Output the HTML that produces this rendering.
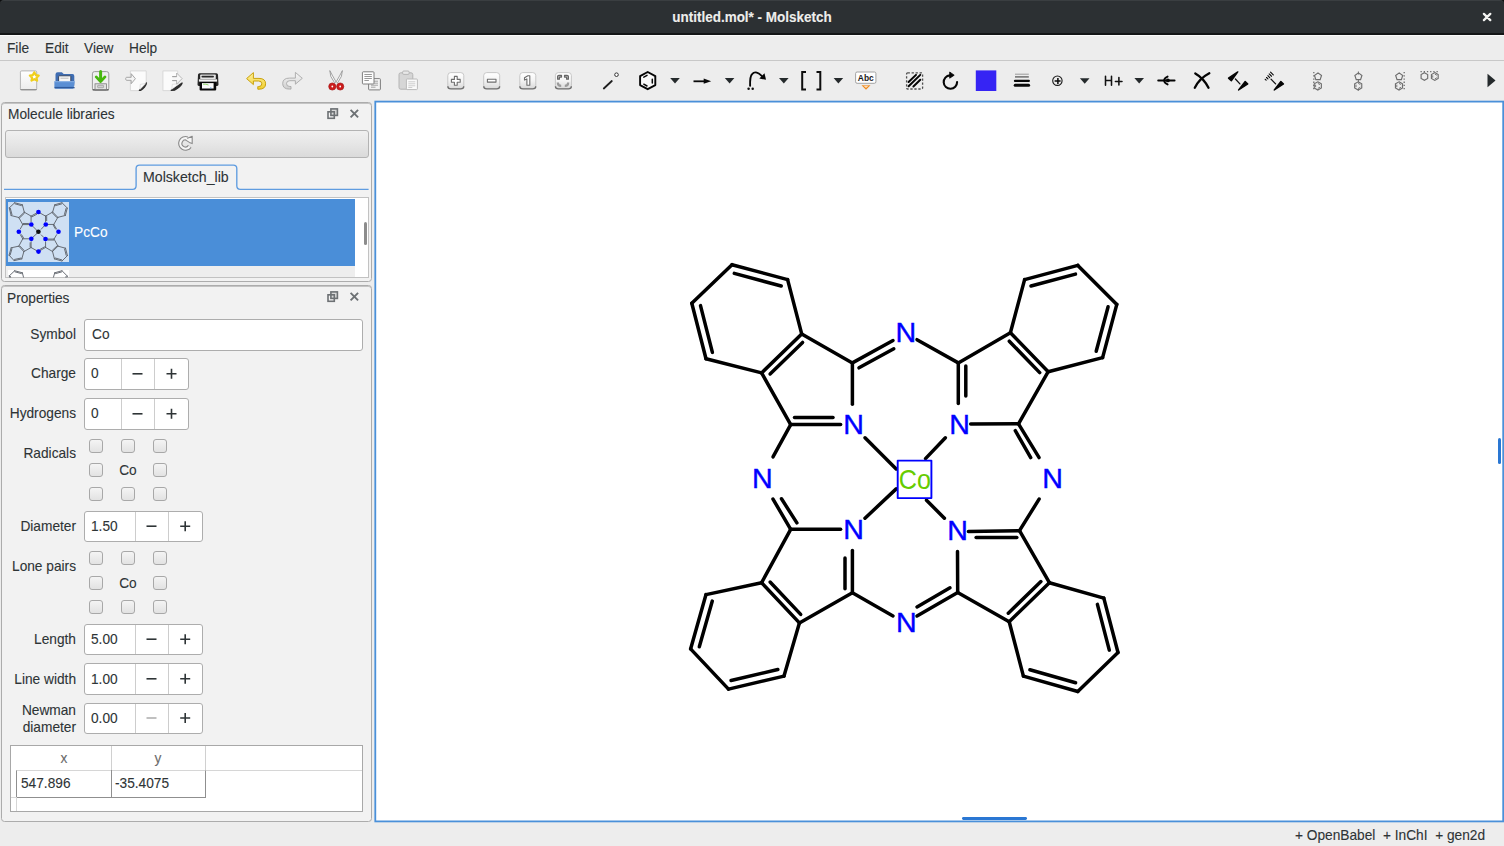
<!DOCTYPE html>
<html><head><meta charset="utf-8">
<style>
*{box-sizing:border-box;margin:0;padding:0}
html,body{width:1504px;height:846px;overflow:hidden}
body{position:relative;background:#ededed;font-family:"Liberation Sans",sans-serif;color:#2e3436}
.a{position:absolute}
.tx{line-height:16px;white-space:nowrap;z-index:4;-webkit-text-stroke:0.1px currentColor}
.dock{background:#f2f2f2;border:1px solid #acacac;border-radius:3.5px;box-shadow:inset 0 1px 0 #c4c4c4}
.inp{background:#fff;border:1px solid #adadad;border-radius:3px}
.spin{background:#fff;border:1px solid #adadad;border-radius:3px}
.spin .d{position:absolute;top:0;bottom:0;width:1px;background:#cdcdcd}
.cb{width:14px;height:14px;border:1px solid #a8a8a8;border-radius:3px;background:linear-gradient(#f4f4f4,#e2e2e2)}
</style></head><body>

<div class="a" style="left:0;top:0;width:1504px;height:12px;background:#0c0d0e"></div><div class="a" style="left:0;top:0;width:1504px;height:35px;background:#2c3033;border-radius:4px 4px 0 0;border-top:1px solid #3a3e41;border-bottom:2px solid #141617"></div><div class="a" style="left:0;top:35px;width:1504px;height:1px;background:#fbfbfb"></div>
<div class="a tx" style="left:602.00px;width:300px;text-align:center;top:8.78px;transform-origin:50% 0;font-size:14.50px;transform:scaleX(0.930);color:#eeeeec;font-weight:bold">untitled.mol* - Molsketch</div>
<svg class="a" style="left:1481px;top:11px" width="12" height="12" viewBox="0 0 12 12"><path d="M2.9 2.9L9.3 9.1M9.3 2.9L2.9 9.1" stroke="#f4f4f2" stroke-width="2.3" stroke-linecap="round"/></svg>
<div class="a" style="left:0;top:36px;width:1504px;height:25px;background:#ededed;border-bottom:1px solid #c8c8c8"></div>
<div class="a tx" style="left:7.00px;top:39.98px;transform-origin:0 0;font-size:14.50px;transform:scaleX(0.945)">File</div>
<div class="a tx" style="left:45.00px;top:39.98px;transform-origin:0 0;font-size:14.50px;transform:scaleX(0.945)">Edit</div>
<div class="a tx" style="left:84.30px;top:39.98px;transform-origin:0 0;font-size:14.50px;transform:scaleX(0.945)">View</div>
<div class="a tx" style="left:129.30px;top:39.98px;transform-origin:0 0;font-size:14.50px;transform:scaleX(0.945)">Help</div>
<svg class="a" style="left:0;top:0;z-index:2" width="1504" height="101" viewBox="0 0 1504 101">
<defs>
<linearGradient id="gpage" x1="0" y1="0" x2="0" y2="1"><stop offset="0" stop-color="#ffffff"/><stop offset="1" stop-color="#ececec"/></linearGradient>
<linearGradient id="gzoom" x1="0" y1="0" x2="0" y2="1"><stop offset="0" stop-color="#ffffff"/><stop offset="0.5" stop-color="#f4f4f4"/><stop offset="1" stop-color="#d9d9d9"/></linearGradient>
<linearGradient id="gfold" x1="0" y1="0" x2="1" y2="1"><stop offset="0" stop-color="#ffffff"/><stop offset="1" stop-color="#333"/></linearGradient>
</defs>
<!-- new -->
<rect x="20.4" y="70.9" width="16.3" height="19.2" rx="1.3" fill="url(#gpage)" stroke="#b4b4b4" stroke-width="1"/>
<path d="M20.4 89.6h16.3" stroke="#8a8a8a" stroke-width="1"/>
<path d="M34.3 72.3l1.45 2.75 3 .45-2.2 2.1.55 3-2.8-1.45-2.8 1.45.55-3-2.2-2.1 3-.45z" fill="#fff" stroke="#f0cf1c" stroke-width="2.2" stroke-linejoin="round"/>
<!-- open -->
<path d="M55.5 74.4q0-2.2 2.2-2.2h4.2l1.8 1.9h8.8q1.8 0 1.8 1.8v9.8h-18.8z" fill="#3f6db2"/>
<rect x="58.6" y="75.8" width="12.2" height="7.8" rx="0.8" fill="#f6f6f6" stroke="#2f3c55" stroke-width="0.9"/>
<path d="M60.5 78.2h8" stroke="#bdbdbd" stroke-width="1"/>
<path d="M54.4 81.2h20.3l-1 6.6q-.2 1-1.2 1h-16.9q-1 0-1.2-1z" fill="#5b8fd4"/>
<path d="M54.6 87.6h20" stroke="#2f5a9c" stroke-width="1.4"/>
<path d="M54.6 81.7h20" stroke="#8fb5e6" stroke-width="0.9"/>
<!-- save -->
<rect x="92.4" y="71.6" width="16.4" height="18.8" rx="2.2" fill="#efefef" stroke="#9b9b9b" stroke-width="1"/>
<path d="M92.6 89.8h16" stroke="#555" stroke-width="1.2"/>
<rect x="95" y="83.8" width="11.4" height="5.6" fill="#e2e2e2" stroke="#7c7c7c" stroke-width="0.8"/>
<rect x="97.6" y="85.3" width="6" height="2.4" rx="0.6" fill="#cfcfcf" stroke="#8c8c8c" stroke-width="0.6"/>
<path d="M100.6 71.4v8.3" stroke="#47b80f" stroke-width="3" stroke-linecap="round"/>
<path d="M96.2 76.9l4.4 4.6 4.4-4.6" fill="none" stroke="#47b80f" stroke-width="2.8" stroke-linecap="round" stroke-linejoin="round"/>
<!-- import -->
<path d="M130.4 70.9h15.8v12.2l-7.3 7.5h-8.5z" fill="#fbfbfb" stroke="#d6d6d6" stroke-width="0.9"/>
<path d="M139.3 90.4l7.2-7.4q-.2 2.2-2 4.2t-4 3.3z" fill="#2e2e2e" stroke="#2e2e2e" stroke-width="1.2" stroke-linejoin="round"/>
<path d="M140.2 84.4l5.6-.9-5.8 5.9z" fill="#fdfdfd" stroke="#c8c8c8" stroke-width="0.5"/>
<path d="M126.6 77.3h4.6v-3.6l4.2 5-4.2 5v-3.4h-4.6q-.9 0-.9-1.5t.9-1.5z" fill="#f4f4f4" stroke="#9d9d9d" stroke-width="0.9" stroke-linejoin="round"/>
<!-- export -->
<path d="M162.9 70.9h14.8v12l-6.3 7.7h-8.5z" fill="#fbfbfb" stroke="#d6d6d6" stroke-width="0.9"/>
<path d="M171.3 90.4l10.8-7.4q-.5 2-2.6 3.8t-5 3.4z" fill="#2e2e2e" stroke="#2e2e2e" stroke-width="1.3" stroke-linejoin="round"/>
<path d="M172.3 84.3l6.8-.6-7.3 5.6z" fill="#fdfdfd" stroke="#c8c8c8" stroke-width="0.5"/>
<path d="M172.4 76.6h4.2v-3.6l5.5 5.6-5.5 5.6v-3.6h-4.2" fill="#f7f7f7" stroke="#b0b0b0" stroke-width="0.9" stroke-linejoin="round"/>
<path d="M172.2 76.6h4.6M172.2 80.6h4.6" stroke="#9c9c9c" stroke-width="0.9"/>
<!-- print -->
<path d="M199.6 73.3h16.8q1.5 0 1.6 1.5l.5 9.8q0 1.3-1.3 1.3h-18.4q-1.3 0-1.3-1.3l.5-9.8q.1-1.5 1.6-1.5z" fill="#262626"/>
<rect x="200.2" y="74.6" width="15.6" height="4.4" rx="0.6" fill="#e4e4e4"/>
<path d="M202.3 76.6h10.8" stroke="#2a2a2a" stroke-width="1.7" stroke-linecap="round"/>
<rect x="198.9" y="79.3" width="18.2" height="2.3" fill="#f2f2f2"/>
<rect x="199.6" y="82" width="16.6" height="8.6" rx="1.1" fill="#080808"/>
<rect x="202" y="83.1" width="11.6" height="5.4" fill="#fbfbfb"/>
<path d="M203 84.2q3-.4 5.5.8" stroke="#8fd66a" stroke-width="1" fill="none"/>
<circle cx="210.8" cy="87.9" r="0.7" fill="#5aa0e6"/>
<!-- undo -->
<defs><linearGradient id="gund" x1="0" y1="0" x2="0" y2="1"><stop offset="0" stop-color="#fdf0a0"/><stop offset="1" stop-color="#f2cf2a"/></linearGradient>
<linearGradient id="gred" x1="0" y1="0" x2="0" y2="1"><stop offset="0" stop-color="#f8f8f8"/><stop offset="1" stop-color="#cfcfcf"/></linearGradient></defs>
<path d="M253.4 72.6l-6.8 6 6.8 6v-3.6h5.2q3.2 0 3.2 2.8t-3.2 2.8h-.8v2.6h1.2q6.6 0 6.6-5.4t-6.6-5.4h-5.6z" fill="url(#gund)" stroke="#c9a10c" stroke-width="1" stroke-linejoin="round"/>
<!-- redo -->
<path d="M295.4 72.4l6.9 5.9-6.9 5.9v-3.5h-5.6q-3.3 0-3.3 2.9t3.3 2.9h1.2v2.6h-1.5q-6.8 0-6.8-5.5t6.8-5.5h5.9z" fill="url(#gred)" stroke="#a8a8a8" stroke-width="0.9" stroke-linejoin="round"/>
<!-- cut -->
<path d="M329.8 70.6q-.4 5.5 4.8 12.2l1.4-1q-3.6-6.2-6.2-11.2z" fill="#fafafa" stroke="#8d8d8d" stroke-width="0.8" stroke-linejoin="round"/>
<path d="M342.4 70.6q.4 5.5-4.8 12.2l-1.4-1q3.6-6.2 6.2-11.2z" fill="#fafafa" stroke="#8d8d8d" stroke-width="0.8" stroke-linejoin="round"/>
<circle cx="332.3" cy="86.5" r="3.6" fill="#cc1c1c" stroke="#a01010" stroke-width="0.6"/>
<circle cx="340.2" cy="86.5" r="3.6" fill="#cc1c1c" stroke="#a01010" stroke-width="0.6"/>
<circle cx="332.3" cy="86.5" r="0.9" fill="#fff"/><circle cx="340.2" cy="86.5" r="0.9" fill="#fff"/>
<!-- copy -->
<rect x="368.6" y="78.6" width="11.8" height="11.3" rx="0.8" fill="#f3f3f3" stroke="#7e7e7e" stroke-width="1"/>
<path d="M371 81.2h7M371 83.2h7M371 85.2h7M371 87.2h4.5" stroke="#9a9a9a" stroke-width="0.9"/>
<rect x="362.4" y="71.8" width="11.6" height="12.2" rx="0.8" fill="#fdfdfd" stroke="#7e7e7e" stroke-width="1"/>
<path d="M364.4 74.5h7.5M364.4 76.5h7.5M364.4 78.5h7.5M364.4 80.5h4.5" stroke="#8c8c8c" stroke-width="0.9"/>
<!-- paste -->
<rect x="399" y="72.8" width="13.8" height="16.4" rx="1.8" fill="#d6d6d6" stroke="#b4b4b4" stroke-width="1"/>
<rect x="402.6" y="71" width="6.6" height="3.4" rx="1.2" fill="#e8e8e8" stroke="#b0b0b0" stroke-width="0.9"/>
<rect x="406.4" y="79" width="11" height="10.6" rx="0.8" fill="#fafafa" stroke="#bababa" stroke-width="1"/>
<path d="M408.3 81.8h7M408.3 83.8h7M408.3 85.8h7M408.3 87.5h4" stroke="#c8c8c8" stroke-width="0.9"/>
<!-- zoom buttons -->
<rect x="447.8" y="72.6" width="16" height="16" rx="3" fill="url(#gzoom)" stroke="#c2c2c2" stroke-width="0.9"/><path d="M447.8 86.2q0 2.6 3 2.6h10q3 0 3-2.6" fill="none" stroke="#707070" stroke-width="1.3"/><rect x="483.7" y="72.6" width="16" height="16" rx="3" fill="url(#gzoom)" stroke="#c2c2c2" stroke-width="0.9"/><path d="M483.7 86.2q0 2.6 3 2.6h10q3 0 3-2.6" fill="none" stroke="#707070" stroke-width="1.3"/><rect x="519.8" y="72.6" width="16" height="16" rx="3" fill="url(#gzoom)" stroke="#c2c2c2" stroke-width="0.9"/><path d="M519.8 86.2q0 2.6 3 2.6h10q3 0 3-2.6" fill="none" stroke="#707070" stroke-width="1.3"/><rect x="555.4" y="72.6" width="16" height="16" rx="3" fill="url(#gzoom)" stroke="#c2c2c2" stroke-width="0.9"/><path d="M555.4 86.2q0 2.6 3 2.6h10q3 0 3-2.6" fill="none" stroke="#707070" stroke-width="1.3"/>
<g fill="#fff" stroke="#6d6d6d" stroke-width="1.1" stroke-linejoin="round">
<path d="M454.4 76.4h2.8v3h3v2.8h-3v3h-2.8v-3h-3v-2.8h3z"/>
<path d="M487.4 79.2h8.6v2.9h-8.6z"/>
<path d="M524.5 77.8l3.4-2.1h1.9v9.6h-2.9v-6.4l-2.4 1.2z"/>
</g>
<g stroke-width="1.2" stroke-linejoin="round">
<path d="M557.6 79.2v-2.6q0-1.3 1.3-1.3h2.6v1.8h-1.5q-.6 0-.6.6v1.5z" fill="#bbb" stroke="#666"/>
<path d="M568.4 79.2v-2.6q0-1.3-1.3-1.3h-2.6v1.8h1.5q.6 0 .6.6v1.5z" fill="#bbb" stroke="#666"/>
<path d="M557.8 82.4q0 3.4 3.4 3.4" fill="none" stroke="#9a9a9a" stroke-width="2.2"/>
<path d="M568.2 82.4q0 3.4-3.4 3.4" fill="none" stroke="#9a9a9a" stroke-width="2.2"/>
</g>
<!-- line tool -->
<path d="M603.8 88.5l8-7.5" stroke="#1e1e1e" stroke-width="1.8" stroke-linecap="round"/>
<circle cx="616.5" cy="74.7" r="1.8" fill="#fff" stroke="#333" stroke-width="1"/>
<!-- hexagon -->
<path d="M647.7 72l7.6 4.1v9l-7.6 4.1-7.6-4.1v-9z" fill="#fafafa" stroke="#050505" stroke-width="1.9" stroke-linejoin="round"/>
<path d="M643.8 77.2l3.2-1.8M652.3 79.2v3.9M643.8 84.2l3.2 1.8" stroke="#0a0a0a" stroke-width="1.5" stroke-linecap="round" fill="none"/>
<!-- dropdowns -->
<g fill="#252a2c">
<path d="M670.2 77.9h9.6l-4.8 5.6z"/>
<path d="M724.8 77.9h9.6l-4.8 5.6z"/>
<path d="M779 77.9h9.6l-4.8 5.6z"/>
<path d="M833.6 77.9h9.6l-4.8 5.6z"/>
<path d="M1079.9 78.2h9.6l-4.8 5.6z"/>
<path d="M1134.4 77.9h9.6l-4.8 5.6z"/>
<path d="M1487.5 73.8l8 6.7-8 6.7z"/>
</g>
<!-- arrow -->
<path d="M693.5 81.3h11" stroke="#0a0a0a" stroke-width="1.8"/>
<path d="M711.2 81.2l-7.5-2.6v5.2z" fill="#0a0a0a"/>
<!-- curved arrow -->
<path d="M750.1 85.8q-.3-10 2.2-11.9q2-2.2 4.6-1.2q2.2.7 4.8 3.2" fill="none" stroke="#050505" stroke-width="1.9" stroke-linecap="round"/>
<path d="M766 79.8l-1.5-6.5-5.2 5.2z" fill="#050505"/>
<circle cx="748.6" cy="88.8" r="1.25" fill="#111"/><circle cx="752.7" cy="88.7" r="1.25" fill="#111"/>
<!-- brackets -->
<path d="M806 71.9h-3.8v17.6h3.8M816.5 71.9h3.8v17.6h-3.8" fill="none" stroke="#0e0e0e" stroke-width="2"/>
<!-- Abc -->
<rect x="855.6" y="72" width="20.3" height="11.3" rx="1.5" fill="#fff" stroke="#9a9a9a" stroke-width="0.9"/>
<text x="865.8" y="80.9" text-anchor="middle" font-family="Liberation Sans" font-weight="bold" font-size="9.2" fill="#1a1a1a" transform="translate(865.8 0) scale(0.92 1) translate(-865.8 0)">Abc</text>
<path d="M861.5 85.3h9l-4.5 4.4z" fill="#f08a1c"/>
<path d="M863.5 85.7h5l-2.5 2.3z" fill="#fff" opacity="0.7"/>
<!-- hatched -->
<rect x="906.6" y="72.8" width="16" height="16.2" rx="1" fill="none" stroke="#505050" stroke-width="1.3" stroke-dasharray="2.3 1.7"/>
<path d="M908.6 82l7.4-7.1M908.6 86.3l11.7-11.4M913.4 86.5l6.9-6.7" stroke="#050505" stroke-width="2" stroke-linecap="round"/>
<!-- rotate -->
<path d="M957.1 82a6.7 6.7 0 1 1-7.2-6.6" fill="none" stroke="#050505" stroke-width="2.1" stroke-linecap="round"/>
<path d="M954.2 75.2l-4.5-3.2v6.2z" fill="#050505" stroke="#050505" stroke-width="0.8" stroke-linejoin="round"/>
<!-- color -->
<rect x="975.8" y="70.4" width="20.5" height="20.6" fill="#3624f4"/>
<!-- line widths -->
<path d="M1015 74.2h13.8" stroke="#9a9a9a" stroke-width="1"/>
<path d="M1015 76.9h13.8" stroke="#5a5a5a" stroke-width="1.3"/>
<path d="M1015 80.9h13.8" stroke="#0a0a0a" stroke-width="2.3" stroke-linecap="round"/>
<path d="M1015.2 85.2h13.4" stroke="#0a0a0a" stroke-width="3" stroke-linecap="round"/>
<!-- charge -->
<circle cx="1057.4" cy="80.7" r="4.7" fill="none" stroke="#1a1a1a" stroke-width="1.1"/>
<path d="M1054.6 80.9h6M1057.9 77.9v6" stroke="#0a0a0a" stroke-width="1.5"/>
<!-- H+ -->
<path d="M1105.5 76.2v9M1111.5 76.2v9M1105.5 80.4h6M1115.4 81.4h6.6M1118.9 77.5v7.5" stroke="#111" stroke-width="1.55" stroke-linecap="round" fill="none"/>
<!-- bond pi -->
<path d="M1158.2 80.5h16.4" stroke="#050505" stroke-width="1.9" stroke-linecap="round"/>
<path d="M1167.6 76.6q-3.4 1.4-3.4 3.9t3.4 3.9" fill="none" stroke="#050505" stroke-width="1.9" stroke-linecap="round"/>
<circle cx="1167.9" cy="80.4" r="1.9" fill="#050505"/>
<!-- X -->
<path d="M1195.3 73.4Q1204 78.4 1208.5 87.8M1209.3 73.3Q1199.5 78.4 1194.8 87.7" fill="none" stroke="#050505" stroke-width="2.3" stroke-linecap="round"/>
<!-- wedge -->
<path d="M1237.8 71.9l-9.3 6.3 2.8 2.6z" fill="#050505" stroke="#050505" stroke-width="1.4" stroke-linejoin="round"/>
<path d="M1235.4 79l4.5 4.9" stroke="#111" stroke-width="1.3" stroke-linecap="round"/>
<path d="M1238.6 90l6.6-8.5 2.6 2.4z" fill="#050505" stroke="#050505" stroke-width="1.4" stroke-linejoin="round"/>
<!-- hashed wedge -->
<path d="M1265.22 79.26L1266.14 80.20M1266.55 77.49L1267.93 78.89M1267.89 75.72L1269.71 77.58M1269.22 73.96L1271.50 76.26M1270.56 72.19L1273.28 74.95" stroke="#050505" stroke-width="1.1" stroke-linecap="round"/>
<path d="M1271 79.1l4.6 4.8" stroke="#111" stroke-width="1.3" stroke-linecap="round"/>
<path d="M1274.3 90l6.6-8.5 2.6 2.4z" fill="#050505" stroke="#050505" stroke-width="1.4" stroke-linejoin="round"/>
<!-- align icons -->
<g fill="none" stroke="#6e6e6e" stroke-width="1.15">
<path d="M1318.00 72.90L1321.52 75.46L1320.17 79.59L1315.83 79.59L1314.48 75.46Z"/><path d="M1317.80 81.80L1321.35 83.85L1321.35 87.95L1317.80 90.00L1314.25 87.95L1314.25 83.85Z"/><path d="M1317.80 83.36L1320.00 84.63M1320.00 87.17L1317.80 88.44M1315.60 87.17L1315.60 84.63" stroke-width="0.9"/><path d="M1313.8 72v18" stroke-dasharray="1.3 1.9" stroke-width="1.3"/><path d="M1358.40 72.90L1361.92 75.46L1360.57 79.59L1356.23 79.59L1354.88 75.46Z"/><path d="M1358.20 81.80L1361.75 83.85L1361.75 87.95L1358.20 90.00L1354.65 87.95L1354.65 83.85Z"/><path d="M1358.20 83.36L1360.40 84.63M1360.40 87.17L1358.20 88.44M1356.00 87.17L1356.00 84.63" stroke-width="0.9"/><path d="M1358.4 71.5v3M1358.4 79.5v3M1358.4 88.5v2" stroke-width="1"/><path d="M1399.20 72.90L1402.72 75.46L1401.37 79.59L1397.03 79.59L1395.68 75.46Z"/><path d="M1399.00 81.80L1402.55 83.85L1402.55 87.95L1399.00 90.00L1395.45 87.95L1395.45 83.85Z"/><path d="M1399.00 83.36L1401.20 84.63M1401.20 87.17L1399.00 88.44M1396.80 87.17L1396.80 84.63" stroke-width="0.9"/><path d="M1404.2 72v18" stroke-dasharray="1.3 1.9" stroke-width="1.3"/><path d="M1424.40 72.70L1427.69 74.60L1427.69 78.40L1424.40 80.30L1421.11 78.40L1421.11 74.60Z"/><path d="M1434.80 72.60L1438.18 74.55L1438.18 78.45L1434.80 80.40L1431.42 78.45L1431.42 74.55Z"/><path d="M1434.80 74.08L1436.89 75.29M1436.89 77.71L1434.80 78.92M1432.71 77.71L1432.71 75.29" stroke-width="0.9"/><path d="M1420.5 71.6h19" stroke-dasharray="1.3 1.9" stroke-width="1.2"/>
</g>
</svg>

<div class="a dock" style="left:1px;top:102px;width:371px;height:180px"></div>
<div class="a tx" style="left:7.50px;top:106.38px;transform-origin:0 0;font-size:14.50px;transform:scaleX(0.945)">Molecule libraries</div>
<svg class="a" style="left:0;top:0;z-index:3" width="372" height="310" viewBox="0 0 372 310">
<g fill="none" stroke="#6d7174" stroke-width="1.6">
<rect x="330.9" y="108.9" width="6.5" height="6.5" fill="#d9d9d9"/><rect x="328" y="111.8" width="6.3" height="6.5"/>
<path d="M350.6 109.8l7.5 7.6M358.1 109.8l-7.5 7.6" stroke-width="1.9"/>
<rect x="330.9" y="291.9" width="6.5" height="6.5" fill="#d9d9d9"/><rect x="328" y="294.8" width="6.3" height="6.5"/>
<path d="M350.6 292.8l7.5 7.6M358.1 292.8l-7.5 7.6" stroke-width="1.9"/>
</g>
</svg>
<div class="a" style="left:5px;top:130px;width:363.5px;height:27.5px;border:1px solid #b3b3b3;border-radius:3px;background:linear-gradient(#f0f0f0,#e6e6e6 50%,#dadada)"></div>
<svg class="a" style="left:0;top:0;z-index:3" width="372" height="160" viewBox="0 0 372 160">
<path d="M187.28 138.51A5.20 5.20 0 1 0 189.76 146.38" fill="none" stroke="#8a8a8a" stroke-width="4.4"/>
<path d="M184.6 139.4l7.6-3.1v7.3l-2.8-1.2z" fill="#f6f6f6" stroke="#8a8a8a" stroke-width="1.1" stroke-linejoin="round"/>
<path d="M187.28 138.51A5.20 5.20 0 1 0 189.76 146.38" fill="none" stroke="#f6f6f6" stroke-width="2.2"/>
</svg>
<svg class="a" style="left:0;top:0;z-index:3" width="372" height="195"><path d="M4 189.3H132.6Q136.1 189.3 136.1 185.8V168.6Q136.1 165.1 139.6 165.1H233.3Q236.8 165.1 236.8 168.6V185.8Q236.8 189.3 240.3 189.3H368.6" fill="none" stroke="#5f9ce0" stroke-width="1.35"/></svg>
<div class="a tx" style="left:143.00px;top:169.18px;transform-origin:0 0;font-size:14.50px;transform:scaleX(0.975)">Molsketch_lib</div>
<div class="a" style="left:5px;top:196.5px;width:363.5px;height:81px;border:1px solid #c2c2c2;background:#fff;overflow:hidden">
 <div class="a" style="left:0;top:1px;width:349px;height:67px;background:#4a8ed8"></div>
 <div class="a" style="left:0;top:68px;width:349px;height:12px;background:#eeeeee"></div>
 <div class="a" style="left:2px;top:4.3px;width:60.6px;height:60px;background:#cfe0f3"></div>
 <div class="a" style="left:2px;top:72.5px;width:60.6px;height:10px;background:#fff"></div>
 <div class="a" style="left:358px;top:24px;width:3px;height:23px;background:#8c8c8c;border-radius:1.5px"></div>
</div>
<div class="a tx" style="left:74.20px;top:224.18px;transform-origin:0 0;font-size:14.50px;transform:scaleX(0.945);color:#ffffff">PcCo</div>
<svg class="a" style="left:0;top:0;z-index:3" width="372" height="290" viewBox="0 0 372 290">
<defs><clipPath id="thc"><rect x="8" y="201.8" width="60.6" height="60"/></clipPath><clipPath id="thc2"><rect x="8" y="270" width="60.6" height="7.5"/></clipPath></defs>
<g clip-path="url(#thc)"><g transform="translate(38.40 231.80) scale(0.1366) translate(-905.5 -477.8)">
<g stroke="#585d64" stroke-width="6.5" stroke-linecap="round" fill="none">
<line x1="732" y1="265" x2="788" y2="280"/>
<line x1="734" y1="273" x2="781" y2="286"/>
<line x1="788" y1="280" x2="802" y2="334"/>
<line x1="802" y1="334" x2="762" y2="373"/>
<line x1="762" y1="373" x2="706" y2="359"/>
<line x1="706" y1="359" x2="692" y2="303"/>
<line x1="712" y1="352" x2="700" y2="306"/>
<line x1="692" y1="303" x2="732" y2="265"/>
<line x1="1078" y1="265" x2="1025" y2="280"/>
<line x1="1075" y1="274" x2="1031" y2="286"/>
<line x1="1025" y1="280" x2="1010" y2="333"/>
<line x1="1010" y1="333" x2="1048" y2="372"/>
<line x1="1048" y1="372" x2="1103" y2="358"/>
<line x1="1103" y1="358" x2="1117" y2="304"/>
<line x1="1096" y1="351" x2="1108" y2="307"/>
<line x1="1117" y1="304" x2="1078" y2="265"/>
<line x1="728" y1="689" x2="784" y2="676"/>
<line x1="731" y1="680" x2="778" y2="670"/>
<line x1="784" y1="676" x2="799" y2="623"/>
<line x1="799" y1="623" x2="762" y2="583"/>
<line x1="762" y1="583" x2="706" y2="595"/>
<line x1="706" y1="595" x2="691" y2="649"/>
<line x1="712" y1="601" x2="699" y2="647"/>
<line x1="691" y1="649" x2="728" y2="689"/>
<line x1="1078" y1="692" x2="1023" y2="676"/>
<line x1="1076" y1="683" x2="1030" y2="670"/>
<line x1="1023" y1="676" x2="1009" y2="622"/>
<line x1="1009" y1="622" x2="1049" y2="583"/>
<line x1="1049" y1="583" x2="1104" y2="598"/>
<line x1="1104" y1="598" x2="1118" y2="652"/>
<line x1="1097" y1="604" x2="1109" y2="650"/>
<line x1="1118" y1="652" x2="1078" y2="692"/>
<line x1="803" y1="342" x2="770" y2="374"/>
<line x1="1009" y1="341" x2="1040" y2="373"/>
<line x1="801" y1="614" x2="770" y2="582"/>
<line x1="1008" y1="613" x2="1041" y2="582"/>
<line x1="802" y1="334" x2="852" y2="363"/>
<line x1="762" y1="373" x2="791" y2="425"/>
<line x1="852" y1="363" x2="893" y2="340"/>
<line x1="859" y1="368" x2="894" y2="349"/>
<line x1="852" y1="363" x2="852" y2="404"/>
<line x1="791" y1="425" x2="841" y2="425"/>
<line x1="794" y1="417" x2="833" y2="417"/>
<line x1="791" y1="425" x2="773" y2="457"/>
<line x1="1010" y1="333" x2="958" y2="363"/>
<line x1="1048" y1="372" x2="1018" y2="424"/>
<line x1="917" y1="340" x2="958" y2="363"/>
<line x1="958" y1="363" x2="958" y2="403"/>
<line x1="966" y1="366" x2="966" y2="396"/>
<line x1="971" y1="424" x2="1018" y2="424"/>
<line x1="1018" y1="424" x2="1039" y2="458"/>
<line x1="1015" y1="431" x2="1031" y2="458"/>
<line x1="799" y1="623" x2="852" y2="593"/>
<line x1="762" y1="583" x2="791" y2="529"/>
<line x1="791" y1="529" x2="773" y2="499"/>
<line x1="782" y1="499" x2="797" y2="523"/>
<line x1="791" y1="529" x2="841" y2="529"/>
<line x1="852" y1="593" x2="852" y2="551"/>
<line x1="845" y1="558" x2="845" y2="589"/>
<line x1="852" y1="593" x2="893" y2="616"/>
<line x1="1009" y1="622" x2="958" y2="592"/>
<line x1="1049" y1="583" x2="1020" y2="531"/>
<line x1="1020" y1="531" x2="1039" y2="499"/>
<line x1="968" y1="531" x2="1020" y2="531"/>
<line x1="976" y1="538" x2="1017" y2="538"/>
<line x1="958" y1="592" x2="958" y2="551"/>
<line x1="958" y1="592" x2="917" y2="616"/>
<line x1="950" y1="588" x2="917" y2="607"/>
<line x1="865" y1="438" x2="896" y2="469"/>
<line x1="945" y1="438" x2="926" y2="459"/>
<line x1="865" y1="518" x2="896" y2="489"/>
<line x1="944" y1="518" x2="926" y2="500"/>
</g>
<g fill="#0000ff">
<circle cx="905.9" cy="332.5" r="17"/>
<circle cx="762.2" cy="477.6" r="17"/>
<circle cx="1052.6" cy="477.6" r="17"/>
<circle cx="906.2" cy="622.5" r="17"/>
<circle cx="853.6" cy="424.4" r="17"/>
<circle cx="959.5" cy="424.3" r="17"/>
<circle cx="853.6" cy="529.4" r="17"/>
<circle cx="957.6" cy="530.3" r="17"/>
</g><circle cx="905.5" cy="477.8" r="17" fill="#111"/>
</g></g>
<g clip-path="url(#thc2)"><g transform="translate(38.40 299.80) scale(0.1366) translate(-905.5 -477.8)">
<g stroke="#585d64" stroke-width="6.5" stroke-linecap="round" fill="none">
<line x1="732" y1="265" x2="788" y2="280"/>
<line x1="734" y1="273" x2="781" y2="286"/>
<line x1="788" y1="280" x2="802" y2="334"/>
<line x1="802" y1="334" x2="762" y2="373"/>
<line x1="762" y1="373" x2="706" y2="359"/>
<line x1="706" y1="359" x2="692" y2="303"/>
<line x1="712" y1="352" x2="700" y2="306"/>
<line x1="692" y1="303" x2="732" y2="265"/>
<line x1="1078" y1="265" x2="1025" y2="280"/>
<line x1="1075" y1="274" x2="1031" y2="286"/>
<line x1="1025" y1="280" x2="1010" y2="333"/>
<line x1="1010" y1="333" x2="1048" y2="372"/>
<line x1="1048" y1="372" x2="1103" y2="358"/>
<line x1="1103" y1="358" x2="1117" y2="304"/>
<line x1="1096" y1="351" x2="1108" y2="307"/>
<line x1="1117" y1="304" x2="1078" y2="265"/>
<line x1="728" y1="689" x2="784" y2="676"/>
<line x1="731" y1="680" x2="778" y2="670"/>
<line x1="784" y1="676" x2="799" y2="623"/>
<line x1="799" y1="623" x2="762" y2="583"/>
<line x1="762" y1="583" x2="706" y2="595"/>
<line x1="706" y1="595" x2="691" y2="649"/>
<line x1="712" y1="601" x2="699" y2="647"/>
<line x1="691" y1="649" x2="728" y2="689"/>
<line x1="1078" y1="692" x2="1023" y2="676"/>
<line x1="1076" y1="683" x2="1030" y2="670"/>
<line x1="1023" y1="676" x2="1009" y2="622"/>
<line x1="1009" y1="622" x2="1049" y2="583"/>
<line x1="1049" y1="583" x2="1104" y2="598"/>
<line x1="1104" y1="598" x2="1118" y2="652"/>
<line x1="1097" y1="604" x2="1109" y2="650"/>
<line x1="1118" y1="652" x2="1078" y2="692"/>
<line x1="803" y1="342" x2="770" y2="374"/>
<line x1="1009" y1="341" x2="1040" y2="373"/>
<line x1="801" y1="614" x2="770" y2="582"/>
<line x1="1008" y1="613" x2="1041" y2="582"/>
<line x1="802" y1="334" x2="852" y2="363"/>
<line x1="762" y1="373" x2="791" y2="425"/>
<line x1="852" y1="363" x2="893" y2="340"/>
<line x1="859" y1="368" x2="894" y2="349"/>
<line x1="852" y1="363" x2="852" y2="404"/>
<line x1="791" y1="425" x2="841" y2="425"/>
<line x1="794" y1="417" x2="833" y2="417"/>
<line x1="791" y1="425" x2="773" y2="457"/>
<line x1="1010" y1="333" x2="958" y2="363"/>
<line x1="1048" y1="372" x2="1018" y2="424"/>
<line x1="917" y1="340" x2="958" y2="363"/>
<line x1="958" y1="363" x2="958" y2="403"/>
<line x1="966" y1="366" x2="966" y2="396"/>
<line x1="971" y1="424" x2="1018" y2="424"/>
<line x1="1018" y1="424" x2="1039" y2="458"/>
<line x1="1015" y1="431" x2="1031" y2="458"/>
<line x1="799" y1="623" x2="852" y2="593"/>
<line x1="762" y1="583" x2="791" y2="529"/>
<line x1="791" y1="529" x2="773" y2="499"/>
<line x1="782" y1="499" x2="797" y2="523"/>
<line x1="791" y1="529" x2="841" y2="529"/>
<line x1="852" y1="593" x2="852" y2="551"/>
<line x1="845" y1="558" x2="845" y2="589"/>
<line x1="852" y1="593" x2="893" y2="616"/>
<line x1="1009" y1="622" x2="958" y2="592"/>
<line x1="1049" y1="583" x2="1020" y2="531"/>
<line x1="1020" y1="531" x2="1039" y2="499"/>
<line x1="968" y1="531" x2="1020" y2="531"/>
<line x1="976" y1="538" x2="1017" y2="538"/>
<line x1="958" y1="592" x2="958" y2="551"/>
<line x1="958" y1="592" x2="917" y2="616"/>
<line x1="950" y1="588" x2="917" y2="607"/>
<line x1="865" y1="438" x2="896" y2="469"/>
<line x1="945" y1="438" x2="926" y2="459"/>
<line x1="865" y1="518" x2="896" y2="489"/>
<line x1="944" y1="518" x2="926" y2="500"/>
</g>
</g></g>
</svg>
<div class="a dock" style="left:1px;top:285px;width:371px;height:537px"></div>
<div class="a tx" style="left:7.10px;top:289.68px;transform-origin:0 0;font-size:14.50px;transform:scaleX(0.945)">Properties</div>
<div class="a tx" style="left:-224.00px;width:300px;text-align:right;top:326.18px;transform-origin:100% 0;font-size:14.50px;transform:scaleX(0.945)">Symbol</div>
<div class="a inp" style="left:84px;top:319px;width:278.5px;height:31.5px"></div>
<div class="a tx" style="left:91.60px;top:325.98px;transform-origin:0 0;font-size:14.50px;transform:scaleX(0.945)">Co</div>
<div class="a tx" style="left:-224.00px;width:300px;text-align:right;top:365.48px;transform-origin:100% 0;font-size:14.50px;transform:scaleX(0.945)">Charge</div><div class="a spin" style="left:84.0px;top:358.0px;width:105.0px;height:31.5px"><div class="d" style="left:36.0px"></div><div class="d" style="left:69.0px"></div></div><div class="a tx" style="left:91.30px;top:365.48px;transform-origin:0 0;font-size:14.50px;transform:scaleX(0.945)">0</div><svg class="a" style="left:0;top:0;overflow:visible;z-index:3" width="1" height="1"><path d="M132.5 373.8h10" stroke="#2e3436" stroke-width="1.6"/><path d="M166.5 373.8h10M171.5 368.8v10" stroke="#2e3436" stroke-width="1.6"/></svg>
<div class="a tx" style="left:-224.00px;width:300px;text-align:right;top:404.98px;transform-origin:100% 0;font-size:14.50px;transform:scaleX(0.945)">Hydrogens</div><div class="a spin" style="left:84.0px;top:398.0px;width:105.0px;height:31.5px"><div class="d" style="left:36.0px"></div><div class="d" style="left:69.0px"></div></div><div class="a tx" style="left:91.30px;top:404.98px;transform-origin:0 0;font-size:14.50px;transform:scaleX(0.945)">0</div><svg class="a" style="left:0;top:0;overflow:visible;z-index:3" width="1" height="1"><path d="M132.5 413.8h10" stroke="#2e3436" stroke-width="1.6"/><path d="M166.5 413.8h10M171.5 408.8v10" stroke="#2e3436" stroke-width="1.6"/></svg>
<div class="a tx" style="left:-224.00px;width:300px;text-align:right;top:444.98px;transform-origin:100% 0;font-size:14.50px;transform:scaleX(0.945)">Radicals</div><div class="a cb" style="left:88.7px;top:438.5px"></div><div class="a cb" style="left:120.6px;top:438.5px"></div><div class="a cb" style="left:152.7px;top:438.5px"></div><div class="a cb" style="left:88.7px;top:463.0px"></div><div class="a tx" style="left:-22.20px;width:300px;text-align:center;top:461.98px;transform-origin:50% 0;font-size:14.50px;transform:scaleX(0.945)">Co</div><div class="a cb" style="left:152.7px;top:463.0px"></div><div class="a cb" style="left:88.7px;top:487.3px"></div><div class="a cb" style="left:120.6px;top:487.3px"></div><div class="a cb" style="left:152.7px;top:487.3px"></div>
<div class="a tx" style="left:-224.00px;width:300px;text-align:right;top:518.28px;transform-origin:100% 0;font-size:14.50px;transform:scaleX(0.945)">Diameter</div><div class="a spin" style="left:84.0px;top:510.5px;width:118.5px;height:31.5px"><div class="d" style="left:50.0px"></div><div class="d" style="left:83.0px"></div></div><div class="a tx" style="left:91.30px;top:518.28px;transform-origin:0 0;font-size:14.50px;transform:scaleX(0.945)">1.50</div><svg class="a" style="left:0;top:0;overflow:visible;z-index:3" width="1" height="1"><path d="M146.5 526.2h10" stroke="#2e3436" stroke-width="1.6"/><path d="M180.2 526.2h10M185.2 521.2v10" stroke="#2e3436" stroke-width="1.6"/></svg>
<div class="a tx" style="left:-224.00px;width:300px;text-align:right;top:557.98px;transform-origin:100% 0;font-size:14.50px;transform:scaleX(0.945)">Lone pairs</div><div class="a cb" style="left:88.7px;top:551.3px"></div><div class="a cb" style="left:120.6px;top:551.3px"></div><div class="a cb" style="left:152.7px;top:551.3px"></div><div class="a cb" style="left:88.7px;top:575.6px"></div><div class="a tx" style="left:-22.20px;width:300px;text-align:center;top:574.58px;transform-origin:50% 0;font-size:14.50px;transform:scaleX(0.945)">Co</div><div class="a cb" style="left:152.7px;top:575.6px"></div><div class="a cb" style="left:88.7px;top:600.0px"></div><div class="a cb" style="left:120.6px;top:600.0px"></div><div class="a cb" style="left:152.7px;top:600.0px"></div>
<div class="a tx" style="left:-224.00px;width:300px;text-align:right;top:630.98px;transform-origin:100% 0;font-size:14.50px;transform:scaleX(0.945)">Length</div><div class="a spin" style="left:84.0px;top:623.5px;width:118.5px;height:31.5px"><div class="d" style="left:50.0px"></div><div class="d" style="left:83.0px"></div></div><div class="a tx" style="left:91.30px;top:630.98px;transform-origin:0 0;font-size:14.50px;transform:scaleX(0.945)">5.00</div><svg class="a" style="left:0;top:0;overflow:visible;z-index:3" width="1" height="1"><path d="M146.5 639.2h10" stroke="#2e3436" stroke-width="1.6"/><path d="M180.2 639.2h10M185.2 634.2v10" stroke="#2e3436" stroke-width="1.6"/></svg>
<div class="a tx" style="left:-224.00px;width:300px;text-align:right;top:670.98px;transform-origin:100% 0;font-size:14.50px;transform:scaleX(0.945)">Line width</div><div class="a spin" style="left:84.0px;top:663.0px;width:118.5px;height:31.5px"><div class="d" style="left:50.0px"></div><div class="d" style="left:83.0px"></div></div><div class="a tx" style="left:91.30px;top:670.98px;transform-origin:0 0;font-size:14.50px;transform:scaleX(0.945)">1.00</div><svg class="a" style="left:0;top:0;overflow:visible;z-index:3" width="1" height="1"><path d="M146.5 678.8h10" stroke="#2e3436" stroke-width="1.6"/><path d="M180.2 678.8h10M185.2 673.8v10" stroke="#2e3436" stroke-width="1.6"/></svg>
<div class="a tx" style="left:-224.00px;width:300px;text-align:right;top:702.48px;transform-origin:100% 0;font-size:14.50px;transform:scaleX(0.945)">Newman</div><div class="a tx" style="left:-224.00px;width:300px;text-align:right;top:719.48px;transform-origin:100% 0;font-size:14.50px;transform:scaleX(0.945)">diameter</div><div class="a spin" style="left:84.0px;top:702.5px;width:118.5px;height:31.0px"><div class="d" style="left:50.0px"></div><div class="d" style="left:83.0px"></div></div><div class="a tx" style="left:91.30px;top:710.48px;transform-origin:0 0;font-size:14.50px;transform:scaleX(0.945)">0.00</div><svg class="a" style="left:0;top:0;overflow:visible;z-index:3" width="1" height="1"><path d="M146.5 718.0h10" stroke="#b0b0b0" stroke-width="1.6"/><path d="M180.2 718.0h10M185.2 713.0v10" stroke="#2e3436" stroke-width="1.6"/></svg>
<div class="a" style="left:10px;top:744.5px;width:353px;height:67.5px;border:1px solid #a8a8a8;background:#fff;overflow:hidden">
<div class="a" style="left:5px;top:24px;width:352px;height:1px;background:#d6d6d6"></div>
<div class="a" style="left:99.5px;top:0;width:1px;height:24px;background:#d0d0d0"></div>
<div class="a" style="left:193.5px;top:0;width:1px;height:24px;background:#d0d0d0"></div>
<div class="a" style="left:5px;top:24px;width:189.5px;height:28.5px;border:1px solid #8f8f8f;border-top-color:#d6d6d6"></div>
<div class="a" style="left:99.5px;top:24px;width:1px;height:28px;background:#8f8f8f"></div>
<div class="a" style="left:0;top:51.5px;width:6px;height:1px;background:#d6d6d6"></div>
<div class="a" style="left:5px;top:52px;width:1px;height:20px;background:#d6d6d6"></div>
</div>
<div class="a tx" style="left:-86.20px;width:300px;text-align:center;top:749.68px;transform-origin:50% 0;font-size:14.50px;transform:scaleX(0.945);color:#6a6a6a">x</div>
<div class="a tx" style="left:8.40px;width:300px;text-align:center;top:749.68px;transform-origin:50% 0;font-size:14.50px;transform:scaleX(0.945);color:#6a6a6a">y</div>
<div class="a tx" style="left:20.80px;top:774.58px;transform-origin:0 0;font-size:14.50px;transform:scaleX(0.945)">547.896</div>
<div class="a tx" style="left:114.70px;top:774.58px;transform-origin:0 0;font-size:14.50px;transform:scaleX(0.945)">-35.4075</div>
<svg class="a" style="left:0;top:0" width="1504" height="846"><rect x="375.3" y="101.6" width="1127.9" height="719.8" fill="#fff" stroke="#4a90d9" stroke-width="1.8"/></svg>
<div class="a" style="left:1498.2px;top:438.2px;width:3px;height:26px;border-radius:1.5px;background:#2a77d3"></div>
<div class="a" style="left:961.7px;top:817px;width:65.7px;height:2.8px;border-radius:1.4px;background:#2a77d3"></div>
<svg class="a" style="left:0;top:0" width="1504" height="846" viewBox="0 0 1504 846">
<g stroke="#000" stroke-width="3.5" stroke-linecap="round" fill="none">
<line x1="732.0" y1="264.7" x2="787.6" y2="279.6"/>
<line x1="734.3" y1="273.4" x2="781.2" y2="286.0"/>
<line x1="787.6" y1="279.6" x2="801.7" y2="333.9"/>
<line x1="801.7" y1="333.9" x2="761.6" y2="372.9"/>
<line x1="761.6" y1="372.9" x2="706.0" y2="358.7"/>
<line x1="706.0" y1="358.7" x2="691.8" y2="303.2"/>
<line x1="712.4" y1="352.4" x2="700.5" y2="305.6"/>
<line x1="691.8" y1="303.2" x2="732.0" y2="264.7"/>
<line x1="1077.8" y1="265.4" x2="1024.6" y2="279.6"/>
<line x1="1075.5" y1="274.1" x2="1031.0" y2="286.0"/>
<line x1="1024.6" y1="279.6" x2="1010.4" y2="332.7"/>
<line x1="1010.4" y1="332.7" x2="1048.2" y2="371.7"/>
<line x1="1048.2" y1="371.7" x2="1102.6" y2="357.6"/>
<line x1="1102.6" y1="357.6" x2="1116.8" y2="304.4"/>
<line x1="1096.2" y1="351.2" x2="1108.1" y2="306.7"/>
<line x1="1116.8" y1="304.4" x2="1077.8" y2="265.4"/>
<line x1="728.5" y1="689.1" x2="784.0" y2="676.1"/>
<line x1="731.1" y1="680.5" x2="777.8" y2="669.5"/>
<line x1="784.0" y1="676.1" x2="799.4" y2="622.9"/>
<line x1="799.4" y1="622.9" x2="761.6" y2="582.7"/>
<line x1="761.6" y1="582.7" x2="706.0" y2="594.6"/>
<line x1="706.0" y1="594.6" x2="690.6" y2="648.9"/>
<line x1="712.3" y1="601.1" x2="699.3" y2="646.7"/>
<line x1="690.6" y1="648.9" x2="728.5" y2="689.1"/>
<line x1="1077.8" y1="691.5" x2="1023.4" y2="676.1"/>
<line x1="1075.6" y1="682.8" x2="1029.9" y2="669.8"/>
<line x1="1023.4" y1="676.1" x2="1009.2" y2="621.7"/>
<line x1="1009.2" y1="621.7" x2="1049.4" y2="582.7"/>
<line x1="1049.4" y1="582.7" x2="1103.8" y2="598.1"/>
<line x1="1103.8" y1="598.1" x2="1118.0" y2="652.5"/>
<line x1="1097.4" y1="604.4" x2="1109.3" y2="650.1"/>
<line x1="1118.0" y1="652.5" x2="1077.8" y2="691.5"/>
<line x1="802.6" y1="342.4" x2="770.1" y2="374.0"/>
<line x1="1009.3" y1="341.2" x2="1039.7" y2="372.6"/>
<line x1="800.7" y1="614.4" x2="770.1" y2="582.0"/>
<line x1="1008.3" y1="613.2" x2="1040.9" y2="581.6"/>
<line x1="801.7" y1="333.9" x2="852.4" y2="362.9"/>
<line x1="761.6" y1="372.9" x2="790.7" y2="424.6"/>
<line x1="852.4" y1="362.9" x2="893.0" y2="340.5"/>
<line x1="859.0" y1="367.8" x2="893.8" y2="348.8"/>
<line x1="852.4" y1="362.9" x2="852.4" y2="404.3"/>
<line x1="790.7" y1="424.6" x2="840.6" y2="424.6"/>
<line x1="794.5" y1="417.4" x2="833.0" y2="417.4"/>
<line x1="790.7" y1="424.6" x2="773.0" y2="456.9"/>
<line x1="1010.4" y1="332.7" x2="958.3" y2="362.9"/>
<line x1="1048.2" y1="371.7" x2="1018.5" y2="423.8"/>
<line x1="917.0" y1="339.7" x2="958.3" y2="362.9"/>
<line x1="958.3" y1="362.9" x2="958.3" y2="403.4"/>
<line x1="965.8" y1="366.0" x2="965.8" y2="396.0"/>
<line x1="970.7" y1="424.1" x2="1018.5" y2="423.8"/>
<line x1="1018.5" y1="423.8" x2="1039.1" y2="457.6"/>
<line x1="1015.3" y1="430.7" x2="1030.7" y2="457.6"/>
<line x1="799.4" y1="622.9" x2="852.4" y2="592.8"/>
<line x1="761.6" y1="582.7" x2="790.7" y2="529.3"/>
<line x1="790.7" y1="529.3" x2="773.0" y2="499.1"/>
<line x1="781.5" y1="498.8" x2="796.9" y2="522.9"/>
<line x1="790.7" y1="529.3" x2="840.6" y2="529.3"/>
<line x1="852.4" y1="592.8" x2="852.4" y2="550.6"/>
<line x1="845.0" y1="558.0" x2="845.0" y2="588.7"/>
<line x1="852.4" y1="592.8" x2="893.0" y2="616.0"/>
<line x1="1009.2" y1="621.7" x2="957.7" y2="592.5"/>
<line x1="1049.4" y1="582.7" x2="1019.5" y2="530.7"/>
<line x1="1019.5" y1="530.7" x2="1039.1" y2="499.1"/>
<line x1="968.4" y1="531.4" x2="1019.5" y2="530.7"/>
<line x1="976.1" y1="537.5" x2="1016.8" y2="537.5"/>
<line x1="957.7" y1="592.5" x2="957.5" y2="551.4"/>
<line x1="957.7" y1="592.5" x2="917.0" y2="616.0"/>
<line x1="950.0" y1="587.8" x2="917.0" y2="606.9"/>
<line x1="865.0" y1="437.8" x2="896.2" y2="469.0"/>
<line x1="945.4" y1="437.8" x2="925.5" y2="458.6"/>
<line x1="865.0" y1="518.2" x2="896.2" y2="488.9"/>
<line x1="944.4" y1="518.2" x2="926.5" y2="500.2"/>
</g>
<g fill="#0000ff" stroke="#0000ff" stroke-width="0.4" font-family="Liberation Sans" font-size="27.5" text-anchor="middle">
<text x="0.0" y="342.5" transform="translate(905.9 0) scale(1.04 1) translate(0.0 0)">N</text>
<text x="0.0" y="487.6" transform="translate(762.2 0) scale(1.04 1) translate(0.0 0)">N</text>
<text x="0.0" y="487.6" transform="translate(1052.6 0) scale(1.04 1) translate(0.0 0)">N</text>
<text x="0.0" y="632.5" transform="translate(906.2 0) scale(1.04 1) translate(0.0 0)">N</text>
<text x="0.0" y="434.4" transform="translate(853.6 0) scale(1.04 1) translate(0.0 0)">N</text>
<text x="0.0" y="434.3" transform="translate(959.5 0) scale(1.04 1) translate(0.0 0)">N</text>
<text x="0.0" y="539.4" transform="translate(853.6 0) scale(1.04 1) translate(0.0 0)">N</text>
<text x="0.0" y="540.3" transform="translate(957.6 0) scale(1.04 1) translate(0.0 0)">N</text>
</g>
<rect x="897.7" y="460.6" width="33.7" height="37.5" fill="none" stroke="#0000ff" stroke-width="1.9" stroke-linejoin="round"/>
<text x="914.8" y="489" fill="#66cc00" font-family="Liberation Sans" font-size="28" text-anchor="middle" transform="translate(914.8 0) scale(0.9 1) translate(-914.8 0)">Co</text>
</svg>
<div class="a tx" style="left:1295.00px;top:827.48px;transform-origin:0 0;font-size:14.50px;transform:scaleX(0.945)">+ OpenBabel&nbsp;&nbsp;+ InChI&nbsp;&nbsp;+ gen2d</div>
</body></html>
